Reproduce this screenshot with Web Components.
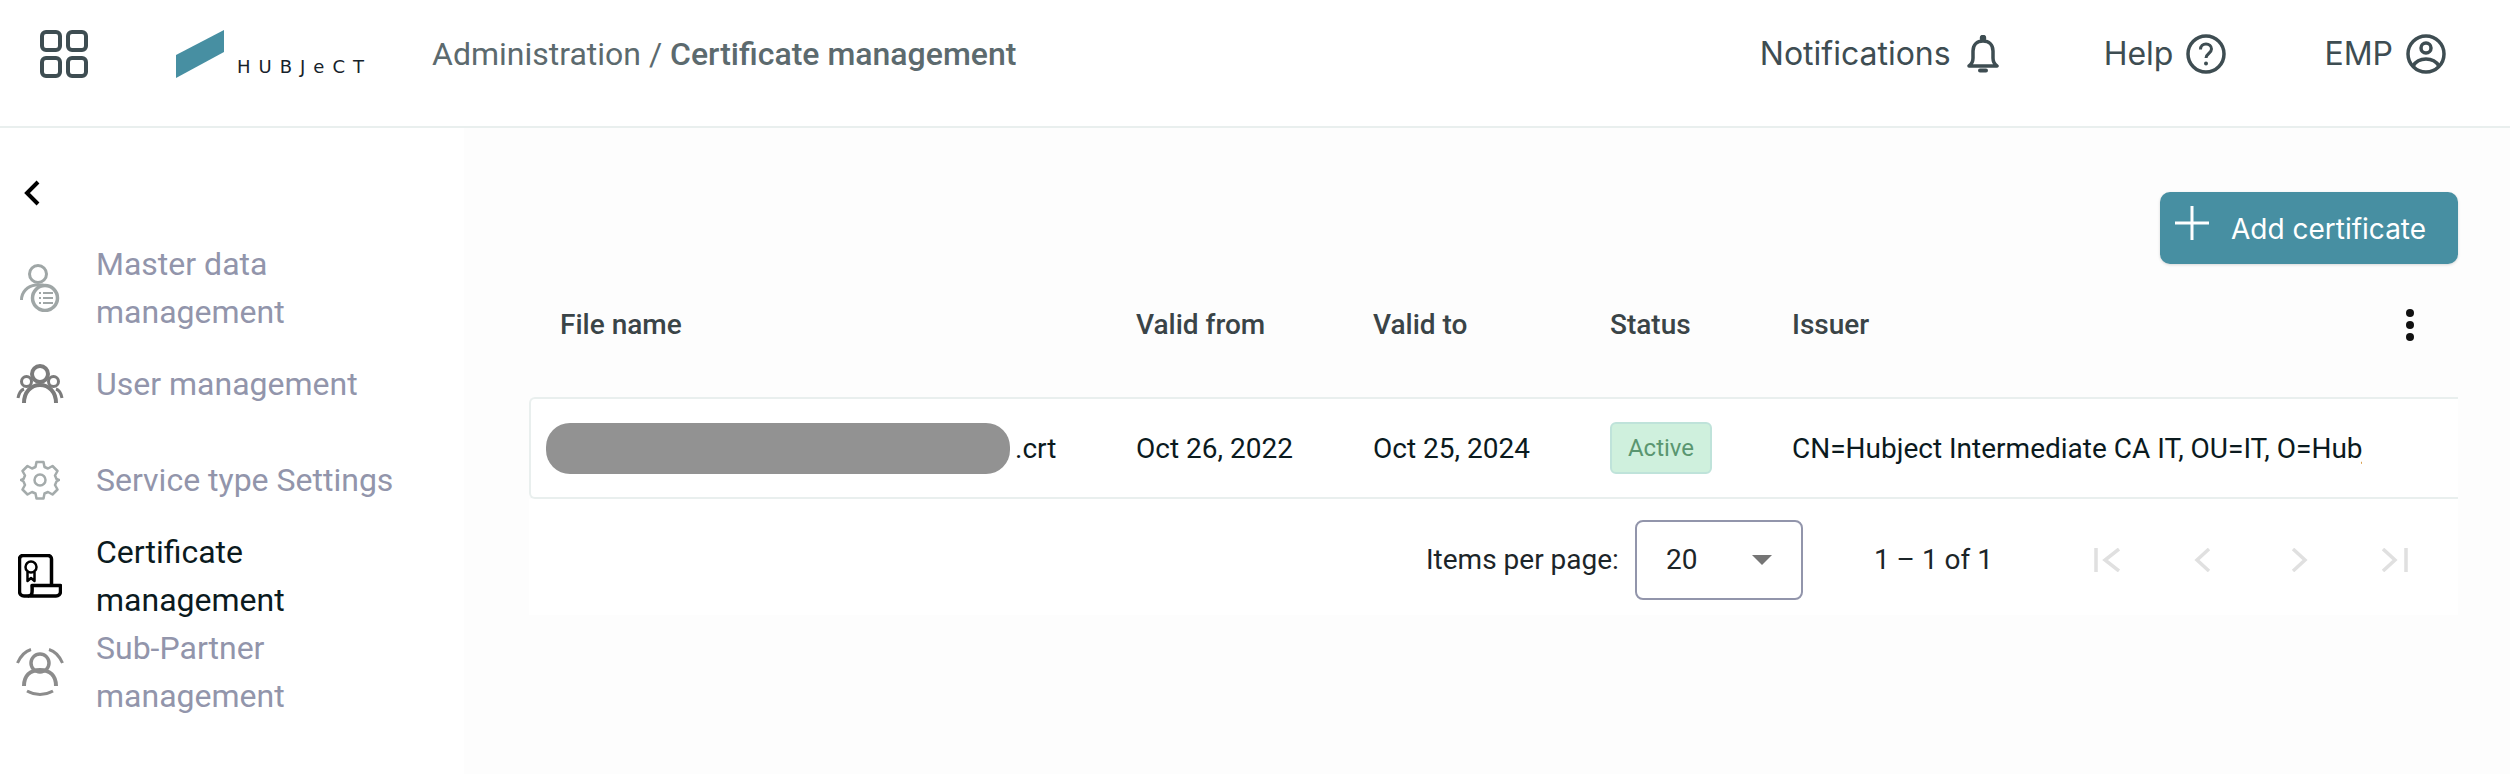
<!DOCTYPE html>
<html lang="en">
<head>
<meta charset="utf-8">
<title>Certificate management</title>
<style>
  html, body { margin: 0; height: 100%; background: #fff; font-family: Roboto, "Liberation Sans", sans-serif; }
</style>
</head>
<body>
<app-shell>
  <app-header slot="header"></app-header>
  <side-nav slot="nav">
    <nav-item label="Master data management">
      <svg width="48" height="48" viewBox="0 0 48 48" fill="none" stroke="#9fa6a6" stroke-width="3">
        <circle cx="22" cy="10" r="8.500"/>
        <path d="M5.500 36c0-8 6-14 14-15h8"/>
        <circle cx="29" cy="34" r="12.500" stroke-width="3.500"/>
        <path d="M27 29h10M27 34h10M27 39h10" stroke-width="1.800"/>
        <path d="M23 29h2M23 34h2M23 39h2" stroke-width="1.800"/>
      </svg>
    </nav-item>
    <nav-item label="User management">
      <svg width="48" height="40" viewBox="0 0 48 40" fill="none" stroke="#7b7b7b" stroke-width="4">
        <circle cx="24" cy="10" r="8"/>
        <circle cx="10.500" cy="17.500" r="5" stroke-width="3"/>
        <circle cx="37.500" cy="17.500" r="5" stroke-width="3"/>
        <path d="M8 39c0-11 7-18 16-18s16 7 16 18" stroke-width="4"/>
        <path d="M2 34c1-5 3-8 6-9M46 34c-1-5-3-8-6-9" stroke-width="3"/>
      </svg>
    </nav-item>
    <nav-item label="Service type Settings">
      <svg width="40" height="40" viewBox="0 0 40 40" fill="none" stroke="#a4abab" stroke-width="2.500" stroke-linejoin="round">
        <circle cx="20" cy="20" r="5.500"/>
        <path d="M16.500 2h7l1 5 3.500 1.500 4.500-2.500 5 5-2.500 4.500L36.500 19l2.500 1v0l-2.500 1.500-1.500 3.500 2.500 4.500-5 5-4.500-2.500-3.500 1.500-1 5h-7l-1-5L12 32l-4.500 2.500-5-5L5 25l-1.500-3.500L1 20l2.500-1L5 15.500 2.500 11l5-5L12 8.500 15.500 7z"/>
      </svg>
    </nav-item>
    <nav-item label="Certificate management" active>
      <svg width="44" height="44" viewBox="0 0 44 44" fill="none" stroke="#000" stroke-width="3.500" stroke-linejoin="round">
        <path d="M11 42H6a4.500 4.500 0 0 1-4.500-4.500V5A3.500 3.500 0 0 1 5 1.500h25A3.500 3.500 0 0 1 33.500 5v26"/>
        <path d="M14 31.500h28.500v6a4.500 4.500 0 0 1-4.500 4.500H11c3 0 3.500-3 3-10.500z"/>
        <circle cx="13" cy="13" r="5.500" stroke-width="2.500"/>
        <path d="M9.500 18v9l3.500-3 3.500 3v-9" stroke-width="2.500"/>
      </svg>
    </nav-item>
    <nav-item label="Sub-Partner management">
      <svg width="48" height="48" viewBox="0 0 48 48" fill="none" stroke="#8c8c8c" stroke-width="3.500">
        <circle cx="24" cy="15" r="9"/>
        <path d="M8 38c0-10 6-16 16-16s16 6 16 16" stroke-width="4"/>
        <path d="M1.500 15C5 7 10 3 15 1.500M46.500 15C43 7 38 3 33 1.500M11 43c8 4.500 18 4.500 26 0" stroke-width="3"/>
      </svg>
    </nav-item>
  </side-nav>
  <cert-page slot="main"></cert-page>
</app-shell>

<script>
// outer frame: header on top, nav + content under it
class AppShell extends HTMLElement {
    constructor() {
        super();
        this.attachShadow({ mode: 'open' });
        this.shadowRoot.innerHTML = `
      <style>
        :host {
          display: flex;
          flex-direction: column;
          height: 100vh;
          overflow: hidden;
        }
        .body {
          flex: 1;
          display: flex;
          min-height: 0;
        }
      </style>
      <slot name="header"></slot>
      <div class="body">
        <slot name="nav"></slot>
        <slot name="main"></slot>
      </div>
    `;
    }
}

class AppHeader extends HTMLElement {
    constructor() {
        super();
        this.attachShadow({ mode: 'open' });
        this.shadowRoot.innerHTML = `
      <style>
        :host {
          display: flex;
          align-items: center;
          height: 126px;
          box-sizing: content-box;
          border-bottom: 2px solid #e9efee;
          padding: 0 64px 0 38px;
          background: #fff;
          color: #3e4d52;
        }
        .apps { display: block; margin-top: -18px; }
        .logo {
          margin-left: 86px;
          position: relative;
          width: 192px;
          height: 48px;
          margin-top: -18px;
          flex: none;
        }
        .logo svg { display: block; }
        .logo span {
          position: absolute;
          left: 61px;
          top: 25px;
          font: 400 18px/24px "DejaVu Sans", "Liberation Sans", sans-serif;
          letter-spacing: 8px;
          color: #16222a;
          white-space: nowrap;
        }
        .crumb {
          margin-left: 64px;
          margin-top: -18px;
          font-size: 32px;
          color: #5c6a6e;
          white-space: nowrap;
        }
        .crumb b { font-weight: 500; }
        .right {
          margin-left: auto;
          margin-top: -18px;
          display: flex;
          align-items: center;
          gap: 98px;
          font: 400 32px/40px Inter, "Liberation Sans", sans-serif;
        }
        .act { display: flex; align-items: center; gap: 13px; }
        .act .bell { margin: 0 7px 0 3px; }
        svg { display: block; }
      </style>
      <svg class="apps" width="52" height="52" viewBox="0 0 52 52" fill="none" stroke="#3e4d52" stroke-width="4">
        <rect x="4" y="4" width="18" height="18" rx="4"/>
        <rect x="30" y="4" width="18" height="18" rx="4"/>
        <rect x="4" y="30" width="18" height="18" rx="4"/>
        <rect x="30" y="30" width="18" height="18" rx="4"/>
      </svg>
      <div class="logo">
        <svg width="48" height="48" viewBox="0 0 48 48"><path d="M0 25 48 0v22L0 48z" fill="#478fa2"/></svg>
        <span>HUBJeCT</span>
      </div>
      <div class="crumb">Administration / <b>Certificate management</b></div>
      <div class="right">
        <div class="act">Notifications
          <svg class="bell" width="32" height="38" viewBox="0 0 32 38" fill="none" stroke="#3e4d52" stroke-width="3.500">
            <path d="M2 31c3-2 4-4 4-8v-7c0-6 4-10 10-10s10 4 10 10v7c0 4 1 6 4 8z" stroke-linejoin="round"/>
            <circle cx="16" cy="3" r="1.500" fill="#3e4d52"/>
            <path d="M13 35.500h6" stroke-width="4" stroke-linecap="round"/>
          </svg>
        </div>
        <div class="act">Help
          <svg width="40" height="40" viewBox="0 0 40 40" fill="none" stroke="#3e4d52" stroke-width="3.500">
            <circle cx="20" cy="20" r="18"/>
            <path d="M14.500 15.500c0-3.500 2.500-5.500 5.500-5.500s5.500 2 5.500 5c0 4.500-5.500 4.500-5.500 9" stroke-width="3"/>
            <circle cx="20" cy="29.500" r="2" fill="#3e4d52" stroke="none"/>
          </svg>
        </div>
        <div class="act">EMP
          <svg width="40" height="40" viewBox="0 0 40 40" fill="none" stroke="#3e4d52" stroke-width="3.500">
            <circle cx="20" cy="20" r="18"/>
            <circle cx="20" cy="14" r="5"/>
            <path d="M7 32c3-5 8-7 13-7s10 2 13 7"/>
          </svg>
        </div>
      </div>
    `;
    }
}

class SideNav extends HTMLElement {
    constructor() {
        super();
        this.attachShadow({ mode: 'open' });
        this.shadowRoot.innerHTML = `
      <style>
        :host {
          display: flex;
          flex-direction: column;
          flex: none;
          width: 464px;
          padding-top: 48px;
          box-sizing: border-box;
          background: #fff;
        }
        .back { padding: 4px 0 0 24px; height: 60px; }
        svg { display: block; }
      </style>
      <div class="back">
        <svg width="16" height="26" viewBox="0 0 16 26" fill="none" stroke="#000" stroke-width="4">
          <path d="M14 2 3 13l11 11"/>
        </svg>
      </div>
      <slot></slot>
    `;
    }
}

class NavItem extends HTMLElement {
    constructor() {
        super();
        this.attachShadow({ mode: 'open' });
        this.shadowRoot.innerHTML = `
      <style>
        :host {
          display: flex;
          align-items: center;
          height: 96px;
          color: #9295ab;
          font-size: 32px;
          line-height: 48px;
        }
        :host([active]) { color: #0b1a1e; }
        .ico {
          flex: none;
          width: 80px;
          margin-right: 16px;
          display: flex;
          justify-content: center;
        }
        .txt { width: 300px; }
      </style>
      <div class="ico"><slot></slot></div>
      <div class="txt" id="t"></div>
    `;
    }

    connectedCallback() {
        this.shadowRoot.getElementById('t').textContent = this.getAttribute('label');
    }
}

class StatusBadge extends HTMLElement {
    constructor() {
        super();
        this.attachShadow({ mode: 'open' });
        this.shadowRoot.innerHTML = `
      <style>
        :host {
          display: inline-flex;
          align-items: center;
          justify-content: center;
          vertical-align: middle;
          box-sizing: border-box;
          width: 102px;
          height: 52px;
          background: #cff0dd;
          border: 2px solid #bfe3da;
          border-radius: 6px;
          color: #5a9670;
          font-size: 24px;
        }
      </style>
      <slot></slot>
    `;
    }
}

class CertTable extends HTMLElement {
    constructor() {
        super();
        this.attachShadow({ mode: 'open' });
        this.shadowRoot.innerHTML = `
      <style>
        :host {
          display: block;
          font-size: 28px;
          color: #0b1a1e;
        }
        .head, .row {
          display: grid;
          grid-template-columns: 607px 237px 237px 182px 570px 1fr;
          align-items: center;
        }
        .head {
          height: 133px;
          padding-bottom: 12px;
          box-sizing: border-box;
          font-weight: 500;
          color: #3a4447;
        }
        .head .first { padding-left: 31px; }
        .dots { display: flex; justify-content: flex-end; padding-right: 43px; }
        .row {
          height: 102px;
          box-sizing: border-box;
          background: #fff;
          border: 2px solid #e9efee;
          border-right: 0;
          border-radius: 6px 0 0 6px;
          grid-template-columns: 605px 237px 237px 182px 570px 1fr;
        }
        .name { display: flex; align-items: center; padding-left: 15px; }
        .redact {
          flex: none;
          width: 464px;
          height: 51px;
          margin-right: 5px;
          border-radius: 24px;
          background: #929292;
        }
        .issuer { white-space: nowrap; overflow: hidden; }
        .status { display: flex; align-items: center; }
      </style>
      <div class="head">
        <div class="first">File name</div>
        <div>Valid from</div>
        <div>Valid to</div>
        <div>Status</div>
        <div>Issuer</div>
        <div class="dots">
          <svg width="10" height="32" viewBox="0 0 10 32" fill="#111">
            <circle cx="5" cy="4" r="4"/><circle cx="5" cy="16" r="4"/><circle cx="5" cy="28" r="4"/>
          </svg>
        </div>
      </div>
      <div class="row">
        <div class="name"><span class="redact"></span>.crt</div>
        <div>Oct 26, 2022</div>
        <div>Oct 25, 2024</div>
        <div class="status"><status-badge>Active</status-badge></div>
        <div class="issuer">CN=Hubject Intermediate CA IT, OU=IT, O=Hubject GmbH, L=Berlin, C=DE</div>
      </div>
    `;
    }
}

class TablePaginator extends HTMLElement {
    constructor() {
        super();
        this.attachShadow({ mode: 'open' });
        this.shadowRoot.innerHTML = `
      <style>
        :host {
          display: flex;
          align-items: center;
          height: 116px;
          padding: 5px 0 0 897px;
          box-sizing: border-box;
          background: #fff;
          font-size: 28px;
          color: #1c2529;
          white-space: nowrap;
        }
        .select {
          display: flex;
          align-items: center;
          justify-content: space-between;
          box-sizing: border-box;
          width: 168px;
          height: 80px;
          margin-left: 16px;
          padding: 0 29px;
          border: 2px solid #9295ab;
          border-radius: 8px;
        }
        .caret {
          width: 0; height: 0;
          border: 10px solid transparent;
          border-top-color: #757575;
          border-bottom: 0;
        }
        .range { margin-left: 71px; width: 220px; }
        .pager { display: flex; }
        .pager svg { display: block; margin-right: 66px; flex: none; }
        .pager svg:last-child { margin-right: 0; }
      </style>
      <span>Items per page:</span>
      <div class="select"><span>20</span><i class="caret"></i></div>
      <span class="range">1 – 1 of 1</span>
      <div class="pager">
        <svg width="30" height="24" viewBox="0 0 30 24" fill="none" stroke="#e0e0e0" stroke-width="3.500"><path d="M2 0v24M25 1 11 12l14 11"/></svg>
        <svg width="30" height="24" viewBox="0 0 30 24" fill="none" stroke="#e0e0e0" stroke-width="3.500"><path d="M19 1 7 12l12 11"/></svg>
        <svg width="30" height="24" viewBox="0 0 30 24" fill="none" stroke="#e0e0e0" stroke-width="3.500"><path d="M7 1l12 11L7 23"/></svg>
        <svg width="30" height="24" viewBox="0 0 30 24" fill="none" stroke="#e0e0e0" stroke-width="3.500"><path d="M1 1l12 11L1 23M24 0v24"/></svg>
      </div>
    `;
    }
}

class CertPage extends HTMLElement {
    constructor() {
        super();
        this.attachShadow({ mode: 'open' });
        this.shadowRoot.innerHTML = `
      <style>
        :host {
          display: block;
          flex: 1;
          min-width: 0;
          box-sizing: border-box;
          padding: 64px 52px 0 65px;
          background: #fdfdfd;
        }
        .bar { display: flex; justify-content: flex-end; }
        .add {
          display: flex;
          align-items: center;
          box-sizing: border-box;
          width: 298px;
          height: 72px;
          padding: 1px 0 0 15px;
          background: #478fa2;
          border-radius: 10px;
          box-shadow: 0 1px 3px rgba(0, 0, 0, 0.15);
          color: #fff;
          font: 400 28px Inter, "Liberation Sans", sans-serif;
          white-space: nowrap;
        }
        .add svg { display: block; margin: -11px 22px 0 0; flex: none; }
      </style>
      <div class="bar">
        <div class="add">
          <svg width="34" height="34" viewBox="0 0 34 34" stroke="#fff" stroke-width="3"><path d="M17 0v34M0 17h34"/></svg>
          Add certificate
        </div>
      </div>
      <cert-table></cert-table>
      <table-paginator></table-paginator>
    `;
    }
}

customElements.define('app-shell', AppShell);
customElements.define('app-header', AppHeader);
customElements.define('side-nav', SideNav);
customElements.define('nav-item', NavItem);
customElements.define('status-badge', StatusBadge);
customElements.define('cert-table', CertTable);
customElements.define('table-paginator', TablePaginator);
customElements.define('cert-page', CertPage);
</script>
</body>
</html>
